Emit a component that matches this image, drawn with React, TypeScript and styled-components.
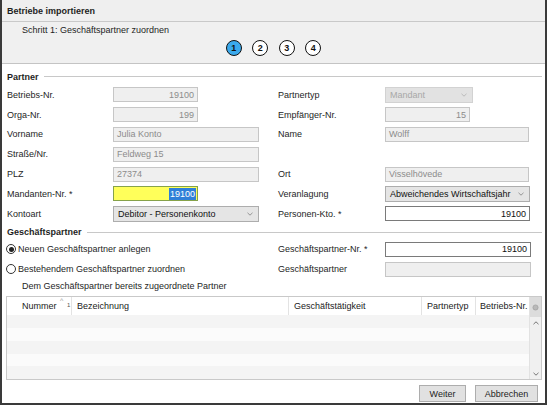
import React from "react";
import styled, { createGlobalStyle, css } from "styled-components";

const GlobalStyle = createGlobalStyle`
  html, body { margin: 0; padding: 0; background: #fff; }
  body {
    font-family: "Liberation Sans", Arial, sans-serif;
    font-size: 9px;
    color: #1e1e1e;
  }
  * { box-sizing: border-box; }
`;

const Window = styled.div`
  width: 547px;
  height: 405px;
  border: 2px solid #3a3a3a;
  border-top: none;
  display: flex;
  flex-direction: column;
  background: #fff;
  overflow: hidden;
`;

const TitleBar = styled.div`
  height: 22px;
  display: flex;
  align-items: center;
  padding-left: 5px;
  font-weight: bold;
  background: #efefef;
  border-bottom: 1px solid #c9c9c9;
`;

const StepHeader = styled.div`
  height: 42px;
  background: #f0f0f0;
  border-bottom: 1px solid #c4c4c4;
  padding: 3px 0 0 20px;
`;

const StepTitle = styled.div`
  line-height: 11px;
`;

const Steps = styled.div`
  display: flex;
  justify-content: center;
  gap: 10.5px;
  margin: 4px 0 0 -20px;
`;

const Step = styled.div<{ $active?: boolean }>`
  width: 16px;
  height: 16px;
  border-radius: 50%;
  border: 1.6px solid #111;
  background: ${(p) => (p.$active ? "#3aa9ec" : "#fff")};
  display: flex;
  align-items: center;
  justify-content: center;
  font-weight: bold;
  font-size: 9px;
  color: #111;
`;

const Body = styled.div`
  flex: 1;
  display: flex;
  flex-direction: column;
  padding: 0 3px 0 4px;
`;

const SectionTitle = styled.div<{ $top: number }>`
  display: flex;
  align-items: center;
  gap: 5px;
  height: 11px;
  margin: ${(p) => p.$top}px 0 0 1px;
  font-weight: bold;

  &::after {
    content: "";
    flex: 1;
    height: 1px;
    background: #c8c8c8;
  }
`;

const FormGrid = styled.div<{ $top: number }>`
  display: grid;
  grid-template-columns: 106px 165px 107px 1fr;
  grid-auto-rows: 19.8px;
  align-items: center;
  margin: ${(p) => p.$top}px 0 0 1px;
`;

const Label = styled.div`
  white-space: nowrap;
`;

const Cell = styled.div`
  display: flex;
  align-items: center;
`;

type BoxKind = "disabled" | "active" | "highlight";

const TextBox = styled.div<{ $kind: BoxKind; $w: number; $right?: boolean }>`
  width: ${(p) => p.$w}px;
  height: 15px;
  display: flex;
  align-items: center;
  justify-content: ${(p) => (p.$right ? "flex-end" : "flex-start")};
  padding: 0 3px;
  border: 1px solid;
  white-space: nowrap;
  ${(p) =>
    p.$kind === "disabled" &&
    css`
      background: #efefef;
      border-color: #c6c6c6;
      color: #8c8c8c;
    `}
  ${(p) =>
    p.$kind === "active" &&
    css`
      background: #fff;
      border-color: #7a7a7a;
      color: #111;
    `}
  ${(p) =>
    p.$kind === "highlight" &&
    css`
      background: #ffff5a;
      border-color: #86a24a;
      color: #fff;
      padding-right: 1px;
    `}
`;

const Selected = styled.span`
  background: #2f7fd8;
  color: #fff;
  padding: 0 1px;
  line-height: 12px;
`;

const Select = styled.div<{ $disabled?: boolean; $w: number }>`
  width: ${(p) => p.$w}px;
  height: 16px;
  display: flex;
  align-items: center;
  justify-content: space-between;
  padding: 0 5px 0 4px;
  border: 1px solid ${(p) => (p.$disabled ? "#d2d2d2" : "#adadad")};
  background: ${(p) => (p.$disabled ? "#e2e2e2" : "#e5e5e5")};
  color: ${(p) => (p.$disabled ? "#a8a8a8" : "#111")};
  font-size: 9px;
  white-space: nowrap;
`;

const Chevron = ({ color = "#8a8a8a" }: { color?: string }) => (
  <svg width="6" height="4" viewBox="0 0 6 4">
    <polyline points="0.5,0.8 3,3.2 5.5,0.8" fill="none" stroke={color} strokeWidth="0.9" />
  </svg>
);

const RadioRow = styled.label`
  display: flex;
  align-items: center;
  gap: 2px;
  margin-left: -1px;
  white-space: nowrap;
`;

const RadioDot = styled.span<{ $checked?: boolean }>`
  width: 10px;
  height: 10px;
  border-radius: 50%;
  border: 1px solid #333;
  background: #fff;
  display: flex;
  align-items: center;
  justify-content: center;

  &::after {
    content: "";
    width: 5px;
    height: 5px;
    border-radius: 50%;
    background: ${(p) => (p.$checked ? "#222" : "transparent")};
  }
`;

const Hint = styled.div`
  margin: 2px 0 0 16px;
  line-height: 11px;
`;

const Table = styled.div`
  margin-top: 4px;
  height: 84px;
  border: 1px solid #c9c9c9;
  display: flex;
`;

const TableMain = styled.div`
  flex: 1;
  display: flex;
  flex-direction: column;
`;

const cols = "65px 217px 133px 54px 1fr";

const HeadRow = styled.div`
  display: grid;
  grid-template-columns: ${cols};
  height: 20px;
  background: #fff;
`;

const HeadCell = styled.div<{ $pad?: number }>`
  position: relative;
  display: flex;
  align-items: center;
  padding-left: ${(p) => p.$pad ?? 5}px;
  border-right: 1px solid #e3e3e3;
  white-space: nowrap;
  color: #222;

  &:last-child {
    border-right: none;
  }
`;

const SortArrow = styled.span`
  position: absolute;
  left: 53px;
  top: 0px;
  font-size: 7px;
  color: #999;
`;

const SortIndex = styled.span`
  position: absolute;
  left: 60px;
  top: 5px;
  font-size: 6px;
  color: #555;
`;

const BodyRow = styled.div<{ $alt?: boolean }>`
  height: 14px;
  background: ${(p) => (p.$alt ? "#f4f4f4" : "#fbfbfb")};
`;

const ScrollBar = styled.div`
  width: 12px;
  display: flex;
  flex-direction: column;
  align-items: center;
  background: #f0f0f0;
  border-left: 1px solid #e2e2e2;
`;

const ScrollHead = styled.div`
  height: 20px;
  width: 100%;
  display: flex;
  align-items: center;
  justify-content: center;
  background: #dcdcdc;
`;

const ScrollTrack = styled.div`
  flex: 1;
  display: flex;
  flex-direction: column;
  justify-content: space-between;
  align-items: center;
  padding: 4px 0 3px;
`;

const Footer = styled.div`
  display: flex;
  justify-content: flex-end;
  gap: 9px;
  padding: 5px 4px 0 0;
`;

const Button = styled.button<{ $w: number }>`
  width: ${(p) => p.$w}px;
  height: 17px;
  padding: 0;
  font-family: inherit;
  font-size: 9px;
  color: #1e1e1e;
  background: #e1e1e1;
  border: 1px solid #adadad;
`;

const UpChevron = () => (
  <svg width="6" height="4" viewBox="0 0 6 4">
    <polyline points="0.5,3.2 3,0.8 5.5,3.2" fill="none" stroke="#666" strokeWidth="0.9" />
  </svg>
);

const App = () => {
  const rows = [0, 1, 2, 3, 4];

  return (
    <>
      <GlobalStyle />
      <Window>
        <TitleBar>Betriebe importieren</TitleBar>

        <StepHeader>
          <StepTitle>Schritt 1: Geschäftspartner zuordnen</StepTitle>
          <Steps>
            <Step $active>1</Step>
            <Step>2</Step>
            <Step>3</Step>
            <Step>4</Step>
          </Steps>
        </StepHeader>

        <Body>
          <SectionTitle $top={7}>Partner</SectionTitle>
          <FormGrid $top={3}>
            <Label>Betriebs-Nr.</Label>
            <Cell>
              <TextBox $kind="disabled" $w={85} $right>19100</TextBox>
            </Cell>
            <Label>Partnertyp</Label>
            <Cell>
              <Select $disabled $w={88}>
                Mandant
                <Chevron color="#b5b5b5" />
              </Select>
            </Cell>

            <Label>Orga-Nr.</Label>
            <Cell>
              <TextBox $kind="disabled" $w={85} $right>199</TextBox>
            </Cell>
            <Label>Empfänger-Nr.</Label>
            <Cell>
              <TextBox $kind="disabled" $w={85} $right>15</TextBox>
            </Cell>

            <Label>Vorname</Label>
            <Cell>
              <TextBox $kind="disabled" $w={146}>Julia Konto</TextBox>
            </Cell>
            <Label>Name</Label>
            <Cell>
              <TextBox $kind="disabled" $w={144}>Wolff</TextBox>
            </Cell>

            <Label>Straße/Nr.</Label>
            <Cell>
              <TextBox $kind="disabled" $w={146}>Feldweg 15</TextBox>
            </Cell>
            <Label />
            <Cell />

            <Label>PLZ</Label>
            <Cell>
              <TextBox $kind="disabled" $w={146}>27374</TextBox>
            </Cell>
            <Label>Ort</Label>
            <Cell>
              <TextBox $kind="disabled" $w={144}>Visselhövede</TextBox>
            </Cell>

            <Label>Mandanten-Nr. *</Label>
            <Cell>
              <TextBox $kind="highlight" $w={85} $right>
                <Selected>19100</Selected>
              </TextBox>
            </Cell>
            <Label>Veranlagung</Label>
            <Cell>
              <Select $w={145}>
                Abweichendes Wirtschaftsjahr
                <Chevron />
              </Select>
            </Cell>

            <Label>Kontoart</Label>
            <Cell>
              <Select $w={146}>
                Debitor - Personenkonto
                <Chevron />
              </Select>
            </Cell>
            <Label>Personen-Kto. *</Label>
            <Cell>
              <TextBox $kind="active" $w={145} $right>19100</TextBox>
            </Cell>
          </FormGrid>

          <SectionTitle $top={3}>Geschäftspartner</SectionTitle>
          <FormGrid $top={2}>
            <RadioRow style={{ gridColumn: "1 / 3" }}>
              <RadioDot $checked />
              Neuen Geschäftspartner anlegen
            </RadioRow>
            <Label>Geschäftspartner-Nr. *</Label>
            <Cell>
              <TextBox $kind="active" $w={146} $right>19100</TextBox>
            </Cell>

            <RadioRow style={{ gridColumn: "1 / 3" }}>
              <RadioDot />
              Bestehendem Geschäftspartner zuordnen
            </RadioRow>
            <Label>Geschäftspartner</Label>
            <Cell>
              <TextBox $kind="disabled" $w={146} />
            </Cell>
          </FormGrid>

          <Hint>Dem Geschäftspartner bereits zugeordnete Partner</Hint>

          <Table>
            <TableMain>
              <HeadRow>
                <HeadCell $pad={15}>
                  Nummer
                  <SortArrow>^</SortArrow>
                  <SortIndex>1</SortIndex>
                </HeadCell>
                <HeadCell>Bezeichnung</HeadCell>
                <HeadCell>Geschäftstätigkeit</HeadCell>
                <HeadCell>Partnertyp</HeadCell>
                <HeadCell $pad={4}>Betriebs-Nr.</HeadCell>
              </HeadRow>
              {rows.map((r) => (
                <BodyRow key={r} $alt={r % 2 === 0} />
              ))}
            </TableMain>
            <ScrollBar>
              <ScrollHead>
                <svg width="7" height="7" viewBox="0 0 7 7">
                  <circle cx="3.5" cy="3.5" r="2.6" fill="#b9b9b9" stroke="#9a9a9a" strokeWidth="0.6" />
                </svg>
              </ScrollHead>
              <ScrollTrack>
                <UpChevron />
                <Chevron color="#666" />
              </ScrollTrack>
            </ScrollBar>
          </Table>

          <Footer>
            <Button $w={47}>Weiter</Button>
            <Button $w={63}>Abbrechen</Button>
          </Footer>
        </Body>
      </Window>
    </>
  );
};

export default App;
